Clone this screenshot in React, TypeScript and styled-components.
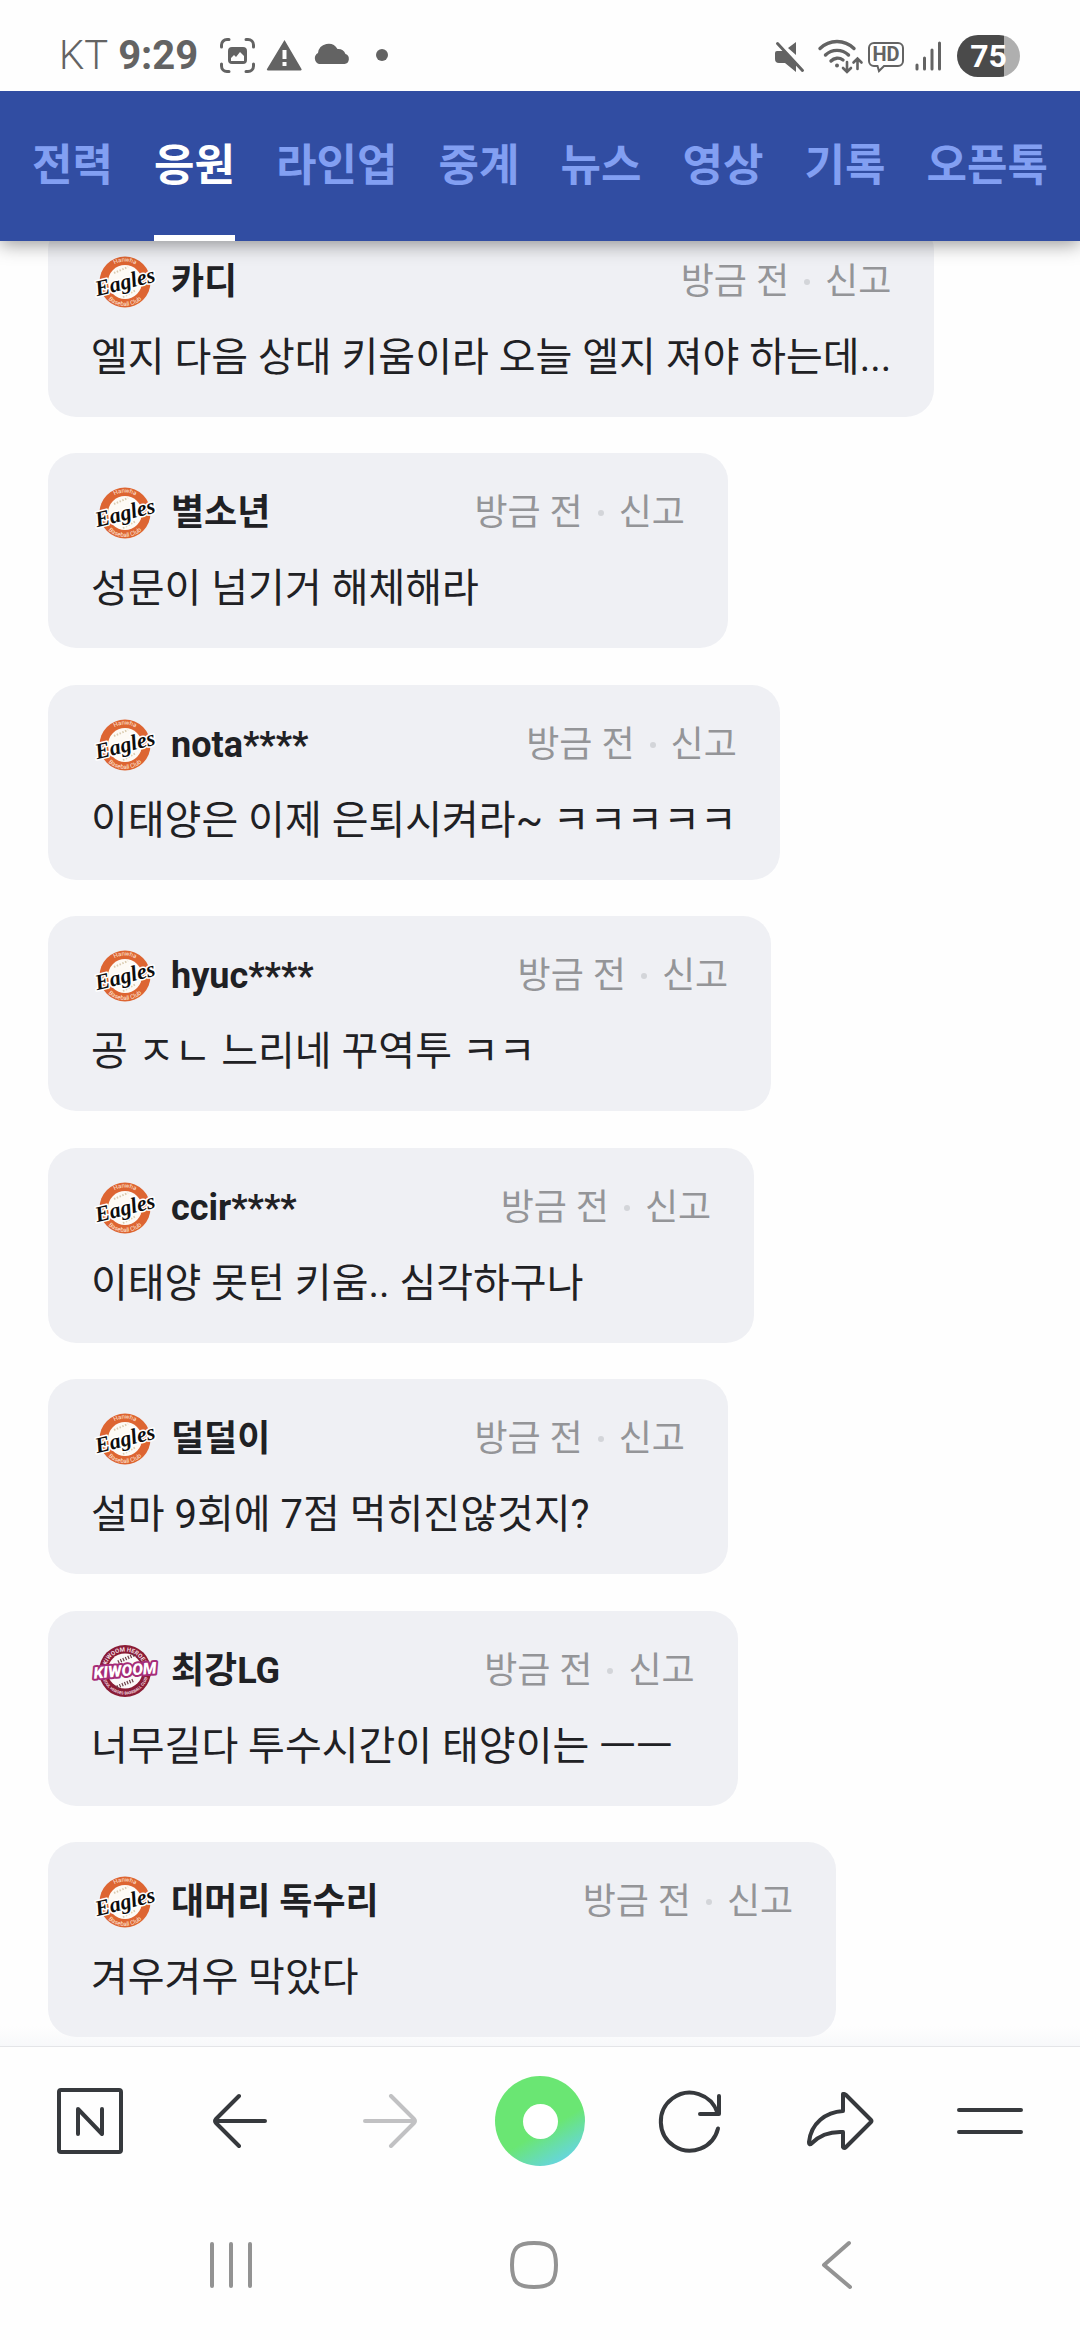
import React from "react";
import styled, { createGlobalStyle } from "styled-components";

const GlobalStyle = createGlobalStyle`
  *, *::before, *::after { box-sizing: border-box; }
  body {
    margin: 0;
    background: #fefefe;
    color: #1f2124;
    font-family: Roboto, "Noto Sans CJK KR", sans-serif;
  }
  button { border: 0; margin: 0; padding: 0; background: none; font: inherit; color: inherit; cursor: pointer; }
  ul { margin: 0; padding: 0; list-style: none; }
  p { margin: 0; }
  svg { display: block; flex: none; overflow: visible; }
`;

const Screen = styled.div`
  display: flex;
  flex-direction: column;
  min-height: 100vh;
`;

const Header = styled.header`
  position: sticky;
  top: 0;
  z-index: 1;
`;

const StatusBar = styled.div`
  position: relative;
  z-index: 1;
  display: flex;
  align-items: center;
  justify-content: space-between;
  height: 91px;
  padding: 20px 60px 0 59px;
  background: #fefefe;
  color: #636363;
`;

const StatusGroup = styled.div<{ $gap: number }>`
  display: flex;
  align-items: center;
  gap: ${(p) => p.$gap}px;
`;

const Carrier = styled.span`
  font-size: 40px;
  line-height: 44px;
  font-weight: 300;
`;

const Clock = styled.time`
  margin-right: 12px;
  font-size: 40px;
  line-height: 44px;
  font-weight: 700;
`;

const Battery = styled.div`
  display: flex;
  align-items: center;
  justify-content: center;
  width: 63px;
  height: 42px;
  border-radius: 21px;
  background: linear-gradient(90deg, #4a4a4a 75%, #afafaf 75%);
  color: #fff;
  font-size: 32px;
  font-weight: 700;
`;

const TabBar = styled.nav`
  display: flex;
  justify-content: space-between;
  height: 150px;
  padding: 0 32px;
  background: #314da2;
  box-shadow: 0 3px 18px rgba(0, 0, 0, 0.42);
`;

const Tab = styled.button<{ $active?: boolean }>`
  padding: 6px 0 0;
  border-bottom: 6px solid ${(p) => (p.$active ? "#fff" : "transparent")};
  color: ${(p) => (p.$active ? "#fff" : "#829ff2")};
  font-size: 44px;
  line-height: 64px;
  font-weight: 700;
  white-space: nowrap;
`;

const Feed = styled.ul`
  display: flex;
  flex: 1;
  flex-direction: column;
  align-items: flex-start;
  justify-content: space-between;
  margin-top: -19px;
  padding: 0 48px 9px;
  background: linear-gradient(0deg, #f7f8fa, #fefefe 20px);
`;

const Bubble = styled.li`
  max-width: 890px;
  padding: 36px 43px 28px;
  border-radius: 28px;
  background: #eff0f4;
`;

const BubbleHead = styled.div`
  display: flex;
  align-items: center;
  height: 48px;
  margin-bottom: 21px;
`;

const Name = styled.strong`
  margin-left: 12px;
  font-size: 36px;
  line-height: 48px;
  font-weight: 700;
  white-space: nowrap;
`;

const Meta = styled.div`
  display: flex;
  align-items: center;
  gap: 15px;
  margin-left: auto;
  padding-left: 204px;
  color: #949598;
  font-size: 36px;
  line-height: 48px;
  white-space: nowrap;
`;

const Dot = styled.span`
  width: 6px;
  height: 6px;
  border-radius: 50%;
  background: #d3d5d9;
`;

const Message = styled.p`
  overflow: hidden;
  font-size: 40px;
  line-height: 62px;
  white-space: nowrap;
  text-overflow: ellipsis;
`;

const Toolbar = styled.nav`
  display: grid;
  grid-template-columns: repeat(7, 150px);
  justify-content: center;
  height: 149px;
  border-top: 1px solid #e4e5e8;
  background: #fefefe;
  color: #36393d;
`;

const SystemBar = styled.nav`
  display: grid;
  grid-template-columns: repeat(3, 303px);
  justify-content: center;
  height: 145px;
  padding: 0 12px 5px 0;
  background: #fefefe;
  color: #939393;
`;

const BarButton = styled.button<{ $faded?: boolean }>`
  display: flex;
  align-items: center;
  justify-content: center;
  opacity: ${(p) => (p.$faded ? 0.3 : 1)};
`;

const HomeOrb = styled.span`
  display: flex;
  align-items: center;
  justify-content: center;
  width: 90px;
  height: 90px;
  border-radius: 50%;
  background: linear-gradient(150deg, #6ae673 58%, #66d5e0 88%);

  &::after {
    content: "";
    width: 35px;
    height: 35px;
    border-radius: 50%;
    background: #fff;
  }
`;

function EaglesLogo() {
  return (
    <svg width="68" height="54" viewBox="0 0 68 54" aria-label="Eagles" role="img">
      <defs>
        <path id="eagles-top" d="M13.500 27a20.500 20.500 0 0 1 41 0" />
        <path id="eagles-bottom" d="M10 27a24 24 0 0 0 48 0" />
      </defs>
      <circle cx="34" cy="27" r="25.500" fill="#dd6532" />
      <circle cx="34" cy="27" r="17" fill="#fdfaf5" />
      <path d="M23 18l14-6M32 42l13-7" stroke="#d9cbb0" strokeWidth="2" strokeDasharray="1.500 1.500" />
      <g fill="#ffe9dd" fontFamily="Roboto, sans-serif" fontSize="6" textAnchor="middle">
        <text><textPath href="#eagles-top" startOffset="50%">Hanwha</textPath></text>
        <text><textPath href="#eagles-bottom" startOffset="50%">Baseball Club</textPath></text>
      </g>
      <text
        x="34"
        y="34"
        fill="#0d0d0d"
        stroke="#fff"
        strokeWidth="3"
        strokeLinejoin="round"
        paintOrder="stroke"
        fontFamily='"Liberation Serif", serif'
        fontSize="22"
        fontStyle="italic"
        fontWeight="700"
        textAnchor="middle"
        transform="rotate(-14 34 27)"
      >
        Eagles
      </text>
    </svg>
  );
}

function KiwoomLogo() {
  return (
    <svg width="68" height="54" viewBox="0 0 68 54" aria-label="Kiwoom" role="img">
      <defs>
        <path id="kiwoom-top" d="M14.500 27a19.500 19.500 0 0 1 39 0" />
        <path id="kiwoom-bottom" d="M10.500 27a23.500 23.500 0 0 0 47 0" />
      </defs>
      <circle cx="34" cy="27" r="26" fill="#8a1c35" />
      <circle cx="34" cy="27" r="17.500" fill="#fbf8f8" />
      <path d="M27 18l16-7M26 43l17-7" stroke="#6b4048" strokeWidth="3.500" strokeDasharray="1.200 1.500" />
      <g fill="#f3dfe3" fontFamily="Roboto, sans-serif" fontWeight="700" textAnchor="middle">
        <text fontSize="6"><textPath href="#kiwoom-top" startOffset="50%">KIWOOM HEROES</textPath></text>
        <text fontSize="4"><textPath href="#kiwoom-bottom" startOffset="50%">SEOUL HEROES BASEBALL CLUB</textPath></text>
      </g>
      <text
        x="34"
        y="32"
        fill="#fff"
        stroke="#a52c78"
        strokeWidth="4"
        strokeLinejoin="round"
        paintOrder="stroke"
        fontFamily="Roboto, sans-serif"
        fontSize="16"
        fontStyle="italic"
        fontWeight="900"
        textAnchor="middle"
        transform="rotate(-5 34 27)"
      >
        KIWOOM
      </text>
    </svg>
  );
}

type Comment = { team: "eagles" | "kiwoom"; name: string; text: string };

const comments: Comment[] = [
  { team: "eagles", name: "카디", text: "엘지 다음 상대 키움이라 오늘 엘지 져야 하는데..." },
  { team: "eagles", name: "별소년", text: "성문이 넘기거 해체해라" },
  { team: "eagles", name: "nota****", text: "이태양은 이제 은퇴시켜라~ ㅋㅋㅋㅋㅋ" },
  { team: "eagles", name: "hyuc****", text: "공 ㅈㄴ 느리네 꾸역투 ㅋㅋ" },
  { team: "eagles", name: "ccir****", text: "이태양 못턴 키움.. 심각하구나" },
  { team: "eagles", name: "덜덜이", text: "설마 9회에 7점 먹히진않것지?" },
  { team: "kiwoom", name: "최강LG", text: "너무길다 투수시간이 태양이는 ㅡㅡ" },
  { team: "eagles", name: "대머리 독수리", text: "겨우겨우 막았다" },
];

const tabs = ["전력", "응원", "라인업", "중계", "뉴스", "영상", "기록", "오픈톡"];

function LeftStatusIcons() {
  return (
    <svg width="168" height="36" viewBox="0 0 168 36" fill="currentColor" aria-hidden="true">
      <g fill="none" stroke="currentColor" strokeWidth="3" strokeLinecap="round">
        <path d="M1.500 9V7a5.500 5.500 0 0 1 5.500-5.500h2M26 1.500h2A5.500 5.500 0 0 1 33.500 7v2M33.500 26v2a5.500 5.500 0 0 1-5.500 5.500h-2M9 33.500H7A5.500 5.500 0 0 1 1.500 28v-2" />
      </g>
      <path fillRule="evenodd" d="M12 9h11a4 4 0 0 1 4 4v9a4 4 0 0 1-4 4H12a4 4 0 0 1-4-4v-9a4 4 0 0 1 4-4zM11 20v3h13v-5l-4-4-4 5-2-2z" />
      <path fillRule="evenodd" d="M64.500 2l17 29a1 1 0 0 1-1 1.500H48a1 1 0 0 1-1-1.500zM62.500 12v9h4v-9zM62.500 24v4h4v-4z" />
      <path d="M99 26a6 6 0 0 1-1-11 10.500 10.500 0 0 1 19.500-4 8 8 0 0 1 8 5 5.200 5.200 0 0 1-1 10z" />
      <circle cx="162" cy="17" r="6" />
    </svg>
  );
}

function RightStatusIcons() {
  return (
    <svg width="170" height="36" viewBox="0 0 170 36" fill="none" stroke="currentColor" strokeLinecap="round" aria-hidden="true">
      <path d="M3 13h8l11 11v10L11 25H5a4 4 0 0 1-4-4v-6a2 2 0 0 1 2-2zM22 4v13l-8-7z" fill="currentColor" stroke="none" />
      <path d="M3.500 5.500l25 27" strokeWidth="3" />
      <g strokeWidth="3.400">
        <path d="M46 10.500a24 24 0 0 1 34 0M51.500 17a16.500 16.500 0 0 1 23 0M57 23a9 9 0 0 1 12-1" />
      </g>
      <circle cx="63" cy="27.500" r="2" fill="currentColor" stroke="none" />
      <path d="M73 24v9.500M69 30l4 4 4-4M83.500 31v-10M79.500 24.500l4-4 4 4" strokeWidth="2.600" />
      <path d="M100 5h24a5 5 0 0 1 5 5v13a5 5 0 0 1-5 5h-14l-5 5-1.500-5H100a5 5 0 0 1-5-5V10a5 5 0 0 1 5-5z" strokeWidth="2" />
      <text x="112" y="23" fill="currentColor" stroke="none" fontFamily="Roboto, sans-serif" fontSize="20" fontWeight="700" textAnchor="middle">HD</text>
      <path d="M143 27v4M150.500 20v11M158 12v19M165.500 5v26" strokeWidth="3" />
    </svg>
  );
}

const line = {
  fill: "none",
  stroke: "currentColor",
  strokeWidth: 4,
  strokeLinecap: "round" as const,
  strokeLinejoin: "round" as const,
  "aria-hidden": true,
};

export default function App() {
  const [active, setActive] = React.useState("응원");
  return (
    <Screen>
      <GlobalStyle />
      <Header>
        <StatusBar>
          <StatusGroup $gap={10}>
            <Carrier>KT</Carrier>
            <Clock>9:29</Clock>
            <LeftStatusIcons />
          </StatusGroup>
          <StatusGroup $gap={13}>
            <RightStatusIcons />
            <Battery>75</Battery>
          </StatusGroup>
        </StatusBar>
        <TabBar>
          {tabs.map((t) => (
            <Tab key={t} type="button" $active={t === active} onClick={() => setActive(t)}>
              {t}
            </Tab>
          ))}
        </TabBar>
      </Header>
      <Feed>
        {comments.map((c) => (
          <Bubble key={c.name}>
            <BubbleHead>
              {c.team === "eagles" ? <EaglesLogo /> : <KiwoomLogo />}
              <Name>{c.name}</Name>
              <Meta>
                <span>방금 전</span>
                <Dot />
                <button type="button">신고</button>
              </Meta>
            </BubbleHead>
            <Message>{c.text}</Message>
          </Bubble>
        ))}
      </Feed>
      <Toolbar aria-label="브라우저">
        <BarButton type="button" aria-label="네이버 홈">
          <svg width="66" height="66" viewBox="0 0 66 66" {...line}>
            <rect x="2" y="2" width="62" height="62" rx="2" />
            <path d="M21 46V21l24 25V21" />
          </svg>
        </BarButton>
        <BarButton type="button" aria-label="뒤로">
          <svg width="54" height="54" viewBox="0 0 54 54" {...line}>
            <path d="M52 27H2M26 2L3 25q-2 2 0 4l23 23" />
          </svg>
        </BarButton>
        <BarButton type="button" aria-label="앞으로" $faded>
          <svg width="54" height="54" viewBox="0 0 54 54" {...line}>
            <path d="M2 27h50M28 2l23 23q2 2 0 4L28 52" />
          </svg>
        </BarButton>
        <BarButton type="button" aria-label="그린닷">
          <HomeOrb />
        </BarButton>
        <BarButton type="button" aria-label="새로고침">
          <svg width="62" height="62" viewBox="0 0 62 62" {...line}>
            <path d="M59 38.500A29 29 0 1 1 58.500 23M60 6v18H41" />
          </svg>
        </BarButton>
        <BarButton type="button" aria-label="공유">
          <svg width="66" height="58" viewBox="0 0 66 58" {...line}>
            <path d="M36 2v17C19 20 4 31 2 50q0 4 3 1 12-12 31-11v15q1 2 3 0l25-25q1-1 0-2L39 3q-2-2-3 0z" />
          </svg>
        </BarButton>
        <BarButton type="button" aria-label="메뉴">
          <svg width="66" height="26" viewBox="0 0 66 26" {...line}>
            <path d="M2 2h62M2 24h62" />
          </svg>
        </BarButton>
      </Toolbar>
      <SystemBar aria-label="시스템">
        <BarButton type="button" aria-label="최근 앱">
          <svg width="44" height="46" viewBox="0 0 44 46" {...line}>
            <path d="M3 2v42M22 2v42M41 2v42" />
          </svg>
        </BarButton>
        <BarButton type="button" aria-label="홈">
          <svg width="48" height="48" viewBox="0 0 48 48" {...line}>
            <path d="M24 2c17 0 22 5 22 22s-5 22-22 22S2 41 2 24 7 2 24 2z" />
          </svg>
        </BarButton>
        <BarButton type="button" aria-label="이전">
          <svg width="30" height="48" viewBox="0 0 30 48" {...line}>
            <path d="M27 2L2 24l26 22" />
          </svg>
        </BarButton>
      </SystemBar>
    </Screen>
  );
}
